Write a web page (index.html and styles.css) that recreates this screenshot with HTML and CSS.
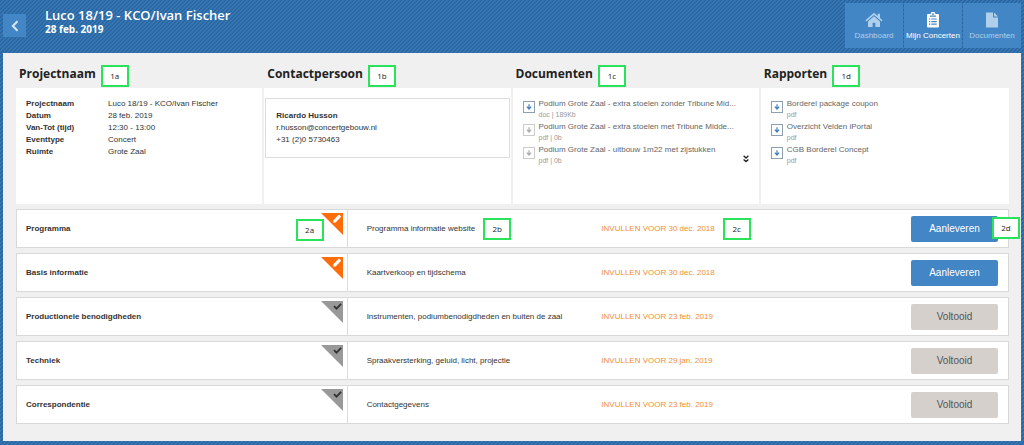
FILE: index.html
```html
<!DOCTYPE html>
<html lang="nl">
<head>
<meta charset="utf-8">
<meta name="viewport" content="width=device-width, initial-scale=1">
<title>Luco 18/19 - KCO/Ivan Fischer</title>
<link rel="stylesheet" href="styles.css">
</head>
<body>
<svg class="sprite" aria-hidden="true">
  <symbol id="download" viewBox="0 0 12 12"><path d="M6 2.8v5.6M3.4 5.6L6 8.5l2.6-2.9" fill="none" stroke="currentColor" stroke-width="1.4"/></symbol>
  <symbol id="edit-corner" viewBox="0 0 22 22"><path d="M0 0h22v22z" fill="#ff6c0a"/><path d="M12 9.800l.4-2.600 5-5.200q.6-.6 1.200 0l1.100 1.100q.6.600 0 1.200l-5.100 5.100z" fill="#fff"/></symbol>
  <symbol id="done-corner" viewBox="0 0 22 22"><path d="M0 0h22v22z" fill="#999"/><path d="M13 5.2l2.5 2.5 4.6-4.8" fill="none" stroke="#333" stroke-width="1.8"/></symbol>
</svg>

<header class="topbar">
  <button class="back" type="button" aria-label="Terug"><svg viewBox="0 0 10 14"><path d="M7.5 2.2L2.8 7l4.7 4.8" fill="none" stroke="currentColor" stroke-width="2"/></svg></button>
  <div class="heading">
    <h1>Luco 18/19 - KCO/Ivan Fischer</h1>
    <p>28 feb. 2019</p>
  </div>
  <nav class="nav">
    <a href="#"><svg viewBox="0 0 18 16"><path d="M9 .8L.4 8.2l1 1.2L9 3l7.600 6.400 1-1.200-2.600-2.300V1.800h-2.300v2.100z"/><path d="M9 4.300L3 9.400V15h4.600v-4.200h2.800V15H15V9.400z"/></svg>Dashboard</a>
    <a href="#" class="active" aria-current="page"><svg viewBox="0 0 18 16"><path fill-rule="evenodd" d="M4 2h2.700a2.300 2.300 0 0 1 4.600 0H14q1 0 1 1v11.500q0 1-1 1H4q-1 0-1-1V3q0-1 1-1zM9 1.200a.9.900 0 1 0 .01 0zM6 3.400v1.400h6V3.400zM5 6.400v1.200h1.300V6.400zm2.300 0v1.200h5.400V6.400zM5 9v1.200h1.300V9zm2.300 0v1.200h5.400V9zM5 11.600v1.200h1.300v-1.200zm2.300 0v1.200h5.400v-1.200z"/></svg>Mijn Concerten</a>
    <a href="#"><svg viewBox="0 0 18 16"><path d="M3 .5h7v5h5v10H3z"/><path d="M11 .5l4 4h-4z"/></svg>Documenten</a>
  </nav>
</header>

<main class="panel">
  <div class="columns">
    <section class="column">
      <h2>Projectnaam <span class="tag">1a</span></h2>
      <div class="card">
        <table class="info">
          <tr><th scope="row">Projectnaam</th><td>Luco 18/19 - KCO/Ivan Fischer</td></tr>
          <tr><th scope="row">Datum</th><td>28 feb. 2019</td></tr>
          <tr><th scope="row">Van-Tot (tijd)</th><td>12:30 - 13:00</td></tr>
          <tr><th scope="row">Eventtype</th><td>Concert</td></tr>
          <tr><th scope="row">Ruimte</th><td>Grote Zaal</td></tr>
        </table>
      </div>
    </section>
    <section class="column">
      <h2>Contactpersoon <span class="tag">1b</span></h2>
      <div class="card contact-card">
        <address class="contact"><strong>Ricardo Husson</strong><br>r.husson@concertgebouw.nl<br>+31 (2)0 5730463</address>
      </div>
    </section>
    <section class="column">
      <h2>Documenten <span class="tag">1c</span></h2>
      <div class="card">
        <ul class="files">
          <li><a href="#"><svg class="dl"><use href="#download"/></svg><span>Podium Grote Zaal - extra stoelen zonder Tribune Mid...<small>doc | 189Kb</small></span></a></li>
          <li><a href="#"><svg class="dl dl-off"><use href="#download"/></svg><span>Podium Grote Zaal - extra stoelen met Tribune Midde...<small>pdf | 0b</small></span></a></li>
          <li><a href="#"><svg class="dl dl-off"><use href="#download"/></svg><span>Podium Grote Zaal - uitbouw 1m22 met zijstukken<small>pdf | 0b</small></span></a></li>
        </ul>
        <button class="more" type="button" aria-label="Meer documenten"><svg viewBox="0 0 6 8"><path d="M.6.800L3 3 5.400.800M.6 4.400L3 6.600l2.400-2.200" fill="none" stroke="currentColor" stroke-width="1.300"/></svg></button>
      </div>
    </section>
    <section class="column">
      <h2>Rapporten <span class="tag">1d</span></h2>
      <div class="card">
        <ul class="files">
          <li><a href="#"><svg class="dl"><use href="#download"/></svg><span>Borderel package coupon<small>pdf</small></span></a></li>
          <li><a href="#"><svg class="dl"><use href="#download"/></svg><span>Overzicht Velden iPortal<small>pdf</small></span></a></li>
          <li><a href="#"><svg class="dl"><use href="#download"/></svg><span>CGB Borderel Concept<small>pdf</small></span></a></li>
        </ul>
      </div>
    </section>
  </div>

  <div class="tasks">
    <article class="task">
      <h3>Programma<span class="tag tag-name">2a</span><svg class="corner"><use href="#edit-corner"/></svg></h3>
      <p>Programma informatie website <span class="tag">2b</span></p>
      <p class="due">INVULLEN VOOR 30 dec. 2018 <span class="tag">2c</span></p>
      <button class="btn" type="button">Aanleveren</button>
      <span class="tag tag-action">2d</span>
    </article>
    <article class="task">
      <h3>Basis informatie<svg class="corner"><use href="#edit-corner"/></svg></h3>
      <p>Kaartverkoop en tijdschema</p>
      <p class="due">INVULLEN VOOR 30 dec. 2018</p>
      <button class="btn" type="button">Aanleveren</button>
    </article>
    <article class="task">
      <h3>Productionele benodigdheden<svg class="corner"><use href="#done-corner"/></svg></h3>
      <p>Instrumenten, podiumbenodigdheden en buiten de zaal</p>
      <p class="due">INVULLEN VOOR 23 feb. 2019</p>
      <button class="btn btn-done" type="button">Voltooid</button>
    </article>
    <article class="task">
      <h3>Techniek<svg class="corner"><use href="#done-corner"/></svg></h3>
      <p>Spraakversterking, geluid, licht, projectie</p>
      <p class="due">INVULLEN VOOR 29 jan. 2019</p>
      <button class="btn btn-done" type="button">Voltooid</button>
    </article>
    <article class="task">
      <h3>Correspondentie<svg class="corner"><use href="#done-corner"/></svg></h3>
      <p>Contactgegevens</p>
      <p class="due">INVULLEN VOOR 23 feb. 2019</p>
      <button class="btn btn-done" type="button">Voltooid</button>
    </article>
  </div>
</main>
</body>
</html>
```
FILE: styles.css
```css
* { box-sizing: border-box; }

:root {
  --body: "Liberation Sans", Arial, sans-serif;
  --title: "Open Sans", sans-serif;
}

body {
  margin: 0;
  padding: 3px 3px 4px;
  font: 8px/12px var(--body);
  color: #333;
  background: linear-gradient(135deg, #2867a3 0 25%, #3877b2 25% 50%, #2867a3 50% 75%, #3877b2 75%) 0 0 / 4px 4px;
}

h1, h2, h3, p, ul { margin: 0; padding: 0; }
ul { list-style: none; }
a { color: inherit; text-decoration: none; }
button { border: 0; padding: 0; font-family: inherit; cursor: pointer; }
.sprite { display: none; }

.topbar { display: flex; align-items: flex-start; height: 50px; }
.back {
  display: grid;
  place-items: center;
  width: 23px;
  height: 23px;
  margin-top: 11px;
  color: #d8e8f6;
  background: #4386c6;
}
.back svg { width: 10px; height: 14px; }
.heading {
  flex: 1;
  padding: 5px 0 0 19px;
  color: #fff;
  font-family: var(--title);
}
h1 { font-size: 13px; font-weight: 600; line-height: 15px; }
.heading p { font-size: 10px; font-weight: 700; line-height: 12px; }

.nav { display: flex; gap: 1px; }
.nav a {
  display: flex;
  flex-direction: column;
  align-items: center;
  gap: 2px;
  width: 58px;
  height: 45px;
  padding-top: 9px;
  color: #b0cfea;
  background: #4386c6;
}
.nav svg { width: 18px; height: 16px; fill: currentColor; }
.nav .active { color: #fff; }

.panel { padding: 0 12px 17px 13px; background: #f0f0f0; }
.columns { display: grid; grid-template-columns: repeat(4, minmax(0, 1fr)); }
h2 {
  display: flex;
  align-items: flex-end;
  gap: 5px;
  height: 35px;
  padding: 0 3px 1px;
  color: #222;
  font: 700 12px/26px var(--title);
}
.card {
  position: relative;
  height: 116px;
  margin-right: 2px;
  padding: 10px;
  background: #fff;
}
.column:last-child .card { margin-right: 0; }

.tag {
  display: inline-grid;
  flex: none;
  place-items: center;
  width: 28px;
  height: 22px;
  border: 2px solid #2be35a;
  background: #fff;
  color: #222;
  font: 400 8px/12px var(--title);
}

.info { border-collapse: collapse; }
.info th, .info td { padding: 0; text-align: left; }
.info th { width: 82px; }

.contact-card { padding: 10px 1px; }
.contact {
  padding: 11px 10px;
  border: 1px solid #ddd;
  font-style: normal;
}

.files { color: #666; }
.files a { display: flex; gap: 4px; height: 23px; white-space: nowrap; }
.dl {
  flex: none;
  width: 12px;
  height: 12px;
  margin-top: 3px;
  border: 1px solid #8e9fb0;
  color: #3c7cc0;
}
.dl-off { border-color: #ccc; color: #aaa; }
.files small { display: block; color: #999; font-size: 7px; line-height: 10px; }
.more {
  position: absolute;
  right: 10px;
  bottom: 41px;
  width: 6px;
  height: 8px;
  color: #222;
  background: none;
}
.more svg { display: block; }

.tasks { display: grid; gap: 5px; margin-top: 5px; }
.task {
  position: relative;
  display: grid;
  grid-template-columns: 331fr 254fr 310fr 87px;
  align-items: center;
  height: 39px;
  padding-right: 10px;
  border: 1px solid #d9d9d9;
  background: #fff;
}
.task h3 {
  position: relative;
  align-self: stretch;
  display: flex;
  align-items: center;
  padding-left: 9px;
  border-right: 1px solid #ddd;
  font-size: 8px;
}
.corner { position: absolute; top: 3px; right: 4px; width: 22px; height: 22px; }
.task p { display: flex; align-items: center; gap: 8px; padding-left: 19px; white-space: nowrap; }
.task .due { padding-left: 0; color: #f28f2c; }
.btn {
  height: 26px;
  border-radius: 2px;
  color: #fff;
  background: #4386c6;
  font-size: 10px;
}
.btn-done { color: #555; background: #d5d0cb; }
.tag-name { position: absolute; right: 23px; top: 9px; }
.tag-action { position: absolute; right: -12px; top: 7px; }
```
